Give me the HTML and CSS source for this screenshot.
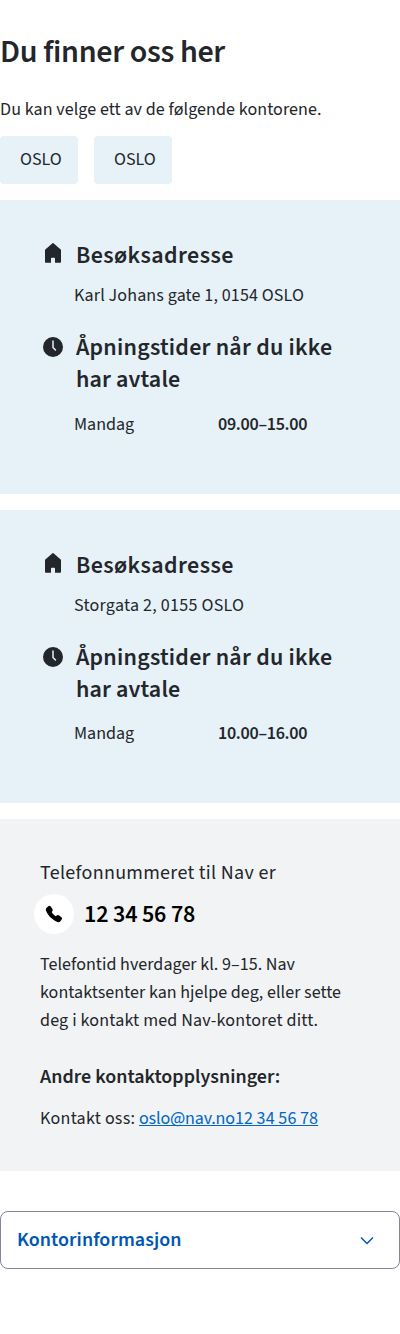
FILE: index.html
```html
<!DOCTYPE html>
<html lang="nb">
<head>
<meta charset="utf-8">
<title>Du finner oss her</title>
<link rel="stylesheet" href="styles.css">
</head>
<body>
<main>
  <h1 class="title">Du finner oss her</h1>
  <p class="intro">Du kan velge ett av de følgende kontorene.</p>
  <nav class="offices">
    <button class="office">OSLO</button>
    <button class="office">OSLO</button>
  </nav>
  <section class="card">
    <div class="row">
      <svg class="icon house" viewBox="0 0 24 24"><path d="M11.500 2.300a.75.75 0 0 1 1 0l7.200 6.300a.9.900 0 0 1 .3.660V21a.8.8 0 0 1-.8.8H14V17.500a.7.700 0 0 0-.7-.7h-2.600a.7.700 0 0 0-.7.7v4.300H4.800A.8.8 0 0 1 4 21V9.260a.9.900 0 0 1 .3-.66z"/></svg>
      <h2 class="heading address">Besøksadresse</h2>
    </div>
    <p class="street street-a">Karl Johans gate 1, 0154 OSLO</p>
    <div class="row">
      <svg class="icon" viewBox="0 0 24 24"><path fill-rule="evenodd" d="M12 2a10 10 0 1 0 0 20 10 10 0 0 0 0-20m.75 4a.75.75 0 0 0-1.500 0v6.500c0 .2.080.390.220.530l2.500 2.500a.75.75 0 0 0 1.060-1.060l-2.280-2.280z"/></svg>
      <h2 class="heading opening">Åpningstider når du ikke<br><span class="second">har avtale</span></h2>
    </div>
    <dl class="hours"><dt>Mandag</dt><dd>09.00–15.00</dd></dl>
  </section>
  <section class="card">
    <div class="row">
      <svg class="icon house" viewBox="0 0 24 24"><path d="M11.500 2.300a.75.75 0 0 1 1 0l7.200 6.300a.9.900 0 0 1 .3.660V21a.8.8 0 0 1-.8.8H14V17.500a.7.700 0 0 0-.7-.7h-2.600a.7.700 0 0 0-.7.7v4.300H4.800A.8.8 0 0 1 4 21V9.260a.9.900 0 0 1 .3-.66z"/></svg>
      <h2 class="heading address">Besøksadresse</h2>
    </div>
    <p class="street street-b">Storgata 2, 0155 OSLO</p>
    <div class="row">
      <svg class="icon" viewBox="0 0 24 24"><path fill-rule="evenodd" d="M12 2a10 10 0 1 0 0 20 10 10 0 0 0 0-20m.75 4a.75.75 0 0 0-1.500 0v6.500c0 .2.080.390.220.530l2.500 2.500a.75.75 0 0 0 1.060-1.060l-2.280-2.280z"/></svg>
      <h2 class="heading opening">Åpningstider når du ikke<br><span class="second">har avtale</span></h2>
    </div>
    <dl class="hours"><dt>Mandag</dt><dd>10.00–16.00</dd></dl>
  </section>
  <section class="contact">
    <p class="phone-label">Telefonnummeret til Nav er</p>
    <div class="phone">
      <span class="phone-disc"><svg viewBox="0 0 20 20"><path d="M4.300 2.200a1.700 1.700 0 0 1 2.400.3l1.800 2.600a1.700 1.700 0 0 1-.2 2.100L7.700 8c.8 1.700 2.200 3.200 4 4.200l1-.8a1.700 1.700 0 0 1 2.100-.1l2.600 1.900a1.700 1.700 0 0 1 .3 2.400l-1.300 1.700c-.7.8-1.800 1.100-2.800.7C8.500 16.100 4 11.600 2 6.500c-.4-1-.1-2.100.6-2.800z"/></svg></span>
      <strong class="number">12 34 56 78</strong>
    </div>
    <p class="info">Telefontid hverdager kl. 9–15. Nav<br>kontaktsenter kan hjelpe deg, eller sette<br><span class="info-end">deg i kontakt med Nav-kontoret ditt.</span></p>
    <h3 class="other">Andre kontaktopplysninger:</h3>
    <p class="mail"><span class="mail-label">Kontakt oss: </span><a href="#"><span class="address-link">oslo@nav.no</span>12 34 56 78</a></p>
  </section>
  <button class="accordion">
    <span class="accordion-label">Kontorinformasjon</span>
    <svg class="chevron" viewBox="0 0 24 24"><path d="m6 9.500 6 6 6-6"/></svg>
  </button>
</main>
</body>
</html>
```
FILE: styles.css
```css
* { box-sizing: border-box; margin: 0; padding: 0; }
body { background: #fff; color: #23262a; font-family: "Source Sans 3", "Noto Sans CJK SC", sans-serif; font-size: 18px; line-height: 28px; }
button { font: inherit; color: inherit; border: 0; text-align: left; }
h1, h2, h3, strong, dd { font-weight: 600; }
p, h1, h2, h3, dt, dd { white-space: nowrap; }
.title { font-size: 32px; line-height: 40px; padding-top: 32px; letter-spacing: -.33px; }
.intro { margin-top: 24px; letter-spacing: .08px; }
.offices { display: flex; gap: 16px; margin-top: 12px; }
.office { width: 78px; height: 48px; padding: 0 0 0 20px; border-radius: 4px; background: #e6f1f8; }
.card { height: 293.5px; padding: 40px 40px 0; margin-top: 16px; background: #e6f1f8; }
.row { display: flex; gap: 11px; }
.icon { width: 24px; height: 24px; margin: 3px 0 0 1px; flex: none; fill: currentColor; }
.house { margin-top: 1px; }
.heading { font-size: 24px; line-height: 32px; }
.address { letter-spacing: .4px; }
.opening { letter-spacing: .22px; }
.second { letter-spacing: .13px; }
.street { margin: 10px 0 22px 34px; }
.street-a { letter-spacing: .13px; }
.street-b { letter-spacing: .25px; }
.hours { display: grid; grid-template-columns: 144px 1fr; margin: 14.6px 0 0 34px; }
.hours dd { letter-spacing: -.3px; }
.contact { height: 352px; margin-top: 16px; padding: 40px 40px 0; background: #f1f3f5; }
.phone-label { font-size: 20px; letter-spacing: .31px; }
.phone { display: flex; align-items: center; gap: 10px; margin: 7px 0 0 -6px; color: #000; }
.phone-disc { display: grid; place-items: center; width: 40px; height: 40px; border-radius: 50%; background: #fff; }
.phone-disc svg { width: 20px; height: 20px; }
.number { font-size: 24px; padding-top: 2px; letter-spacing: -.15px; }
.info { margin-top: 17px; letter-spacing: .04px; }
.info-end { letter-spacing: .18px; }
.other { font-size: 20px; margin-top: 28px; letter-spacing: .02px; }
.mail { margin-top: 14px; }
.mail-label { letter-spacing: .25px; }
.mail a { color: #0067c5; letter-spacing: .08px; text-decoration: underline; text-underline-offset: 1px; text-decoration-thickness: 1px; text-decoration-skip-ink: none; }
.address-link { letter-spacing: -.16px; }
.accordion { display: flex; align-items: center; justify-content: space-between; width: 100%; height: 58px; margin-top: 40px; padding: 0 20px 0 16px; border: 1px solid #818997; border-radius: 8px; background: #fff; color: #0056b4; }
.accordion-label { font-size: 20px; font-weight: 600; letter-spacing: .06px; }
.chevron { width: 24px; height: 24px; fill: none; stroke: currentColor; stroke-width: 1.5; }
```
